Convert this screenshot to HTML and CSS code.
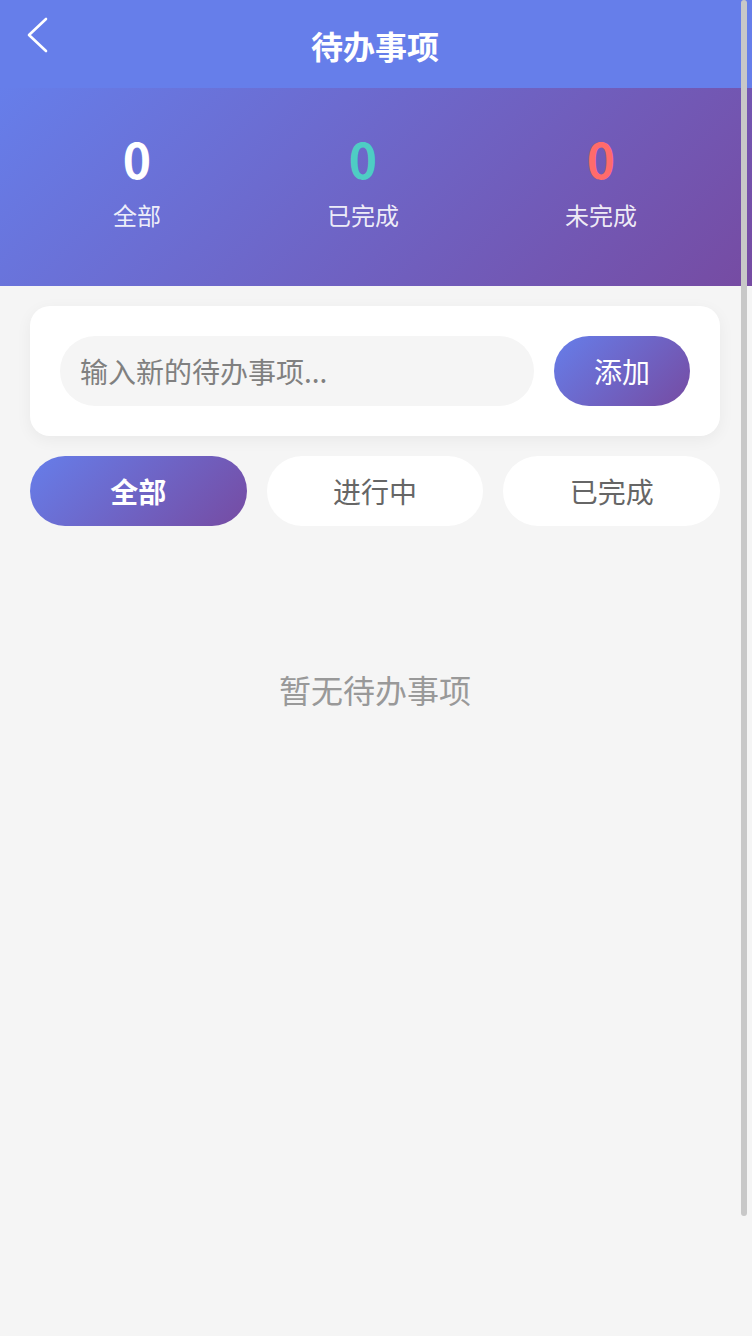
FILE: index.html
```html
<!DOCTYPE html>
<html lang="zh-CN">
<head>
<meta charset="utf-8">
<title>待办事项</title>
<link rel="stylesheet" href="styles.css">
</head>
<body>
<div class="app">
  <header class="topbar">
    <div class="topbar-side">
      <svg class="back" width="24" height="38" viewBox="0 0 24 38" aria-hidden="true">
        <polyline points="20,2 3,18 20,34" fill="none" stroke="#ffffff" stroke-width="2.6" stroke-linecap="round" stroke-linejoin="round"/>
      </svg>
    </div>
    <h1 class="title">待办事项</h1>
    <div class="topbar-side"></div>
  </header>

  <section class="stats">
    <div class="stat">
      <div class="stat-num">0</div>
      <div class="stat-label">全部</div>
    </div>
    <div class="stat">
      <div class="stat-num stat-num--done">0</div>
      <div class="stat-label">已完成</div>
    </div>
    <div class="stat">
      <div class="stat-num stat-num--todo">0</div>
      <div class="stat-label">未完成</div>
    </div>
  </section>

  <main class="content">
    <div class="add-card">
      <input class="add-input" type="text" placeholder="输入新的待办事项...">
      <button class="add-btn" type="button">添加</button>
    </div>

    <nav class="tabs">
      <button class="tab tab--active" type="button">全部</button>
      <button class="tab" type="button">进行中</button>
      <button class="tab" type="button">已完成</button>
    </nav>

    <div class="empty">暂无待办事项</div>
  </main>
</div>
<div class="scroll-thumb" aria-hidden="true"></div>
</body>
</html>
```

FILE: styles.css
```css
* {
  box-sizing: border-box;
}

html, body {
  margin: 0;
  padding: 0;
}

body {
  background: #f5f5f5;
  font-family: "Noto Sans CJK SC", "Noto Sans", sans-serif;
  min-height: 1336px;
}

.app {
  width: 752px;
}

.topbar {
  height: 88px;
  background: #667eea;
  display: grid;
  grid-template-columns: 1fr auto 1fr;
  align-items: center;
  padding-right: 2px;
}

.topbar-side {
  display: flex;
  align-items: center;
}

.back {
  margin-left: 26px;
  margin-top: -16px;
  display: block;
}

.title {
  margin: 0;
  color: #ffffff;
  font-size: 32px;
  font-weight: 700;
  line-height: 44px;
  margin-top: 2px;
}

.stats {
  height: 198px;
  background: linear-gradient(135deg, #667eea 0%, #764ba2 100%);
  display: flex;
  justify-content: space-around;
  align-items: flex-start;
  padding: 40px 32px 0 30px;
}

.stat {
  display: flex;
  flex-direction: column;
  align-items: center;
}

.stat-num {
  color: #ffffff;
  font-size: 48px;
  font-weight: 700;
  line-height: 60px;
}

.stat-num--done {
  color: #4ecdc4;
}

.stat-num--todo {
  color: #ff6b6b;
}

.stat-label {
  margin-top: 10px;
  color: rgba(255, 255, 255, 0.9);
  font-size: 24px;
  line-height: 34px;
}

.content {
  padding: 20px 32px 0 30px;
}

.add-card {
  background: #ffffff;
  border-radius: 20px;
  padding: 30px;
  display: flex;
  gap: 20px;
  box-shadow: 0 4px 16px rgba(0, 0, 0, 0.05);
}

.add-input {
  flex: 1;
  min-width: 0;
  height: 70px;
  border: none;
  outline: none;
  border-radius: 35px;
  background: #f5f5f5;
  padding: 0 20px;
  font-family: inherit;
  font-size: 28px;
  color: #333333;
}

.add-input::placeholder {
  color: #808080;
}

.add-btn {
  width: 136px;
  height: 70px;
  border: none;
  border-radius: 35px;
  background: linear-gradient(135deg, #667eea 0%, #764ba2 100%);
  color: #ffffff;
  font-family: inherit;
  font-size: 28px;
  padding: 0;
}

.tabs {
  margin-top: 20px;
  display: grid;
  grid-template-columns: repeat(3, 1fr);
  gap: 20px;
}

.tab {
  height: 70px;
  border: none;
  border-radius: 35px;
  background: #ffffff;
  color: #666666;
  font-family: inherit;
  font-size: 28px;
  padding: 0;
}

.tab--active {
  background: linear-gradient(135deg, #667eea 0%, #764ba2 100%);
  color: #ffffff;
  font-weight: 700;
}

.empty {
  padding-top: 140px;
  text-align: center;
  color: #999999;
  font-size: 32px;
  line-height: 46px;
}

.scroll-thumb {
  position: fixed;
  top: 0;
  right: 5px;
  width: 6px;
  height: 1216px;
  border-radius: 3px;
  background: #c8c8c8;
}
```
